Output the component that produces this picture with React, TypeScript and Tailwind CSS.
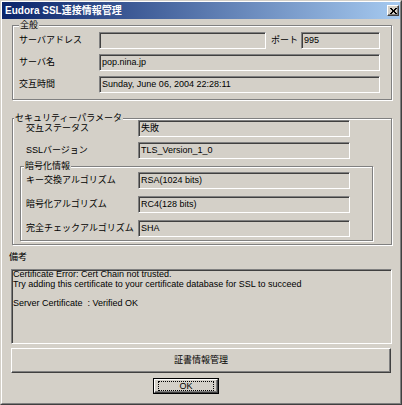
import type { ReactNode } from "react";

const sunken =
  "border border-t-[#808080] border-l-[#808080] border-b-white border-r-white shadow-[inset_1px_1px_0_#404040] bg-[#d4d0c8]";

function Field({ className, children }: { className: string; children?: ReactNode }) {
  return (
    <div className={`${sunken} flex h-[17px] items-center overflow-hidden whitespace-nowrap pl-[2px] text-[9px] leading-none ${className}`}>
      {children}
    </div>
  );
}

function Group({
  label,
  labelLeft,
  className,
  children,
}: {
  label: string;
  labelLeft: string;
  className: string;
  children: ReactNode;
}) {
  return (
    <div className={`relative border border-[#808080] shadow-[inset_1px_1px_0_#fff,1px_1px_0_#fff] ${className}`}>
      <span className={`absolute -top-[6px] bg-[#d4d0c8] px-[1px] text-[9px] leading-[11px] ${labelLeft}`}>
        {label}
      </span>
      {children}
    </div>
  );
}

function Row({ label, labelClass, children }: { label: string; labelClass: string; children: ReactNode }) {
  return (
    <div className="flex items-center">
      <span className={`shrink-0 text-[9px] leading-none ${labelClass}`}>{label}</span>
      {children}
    </div>
  );
}

export default function App() {
  return (
    <div className="h-[405px] w-[402px] border border-t-[#d4d0c8] border-l-[#d4d0c8] border-b-[#404040] border-r-[#404040] bg-[#d4d0c8] font-['Liberation_Sans','Noto_Sans_CJK_JP',sans-serif] text-black">
      <div className="flex h-full flex-col border border-t-white border-l-white border-b-[#808080] border-r-[#808080]">
        {/* title bar */}
        <div className="flex h-[17px] shrink-0 items-center justify-between bg-[linear-gradient(90deg,#0a246a,#a6caf0)] pl-[3px] pr-[1px]">
          <span className="text-[10px] font-bold leading-none text-white">Eudora SSL連接情報管理</span>
          <button className="flex h-[11px] w-[12px] items-center justify-center border border-t-white border-l-white border-b-[#404040] border-r-[#404040] bg-[#d4d0c8] shadow-[inset_-1px_-1px_0_#808080]">
            <svg width="7" height="6" viewBox="0 0 7 6" shapeRendering="crispEdges">
              <path d="M0 0h2v1h-2zM5 0h2v1h-2zM1 1h2v1h-2zM4 1h2v1h-2zM2 2h3v2h-3zM1 4h2v1h-2zM4 4h2v1h-2zM0 5h2v1h-2zM5 5h2v1h-2z" fill="#000" />
            </svg>
          </button>
        </div>

        {/* 全般 */}
        <Group label="全般" labelLeft="left-[6px]" className="ml-[10px] mt-[6px] h-[75px] w-[380px] shrink-0">
          <div className="flex flex-col gap-[5px] pt-[6px]">
            <Row label="サーバアドレス" labelClass="w-[86px] pl-[6px]">
              <Field className="w-[167px]" />
              <span className="ml-[5px] w-[30px] text-[9px] leading-none">ポート</span>
              <Field className="w-[79px]">995</Field>
            </Row>
            <Row label="サーバ名" labelClass="w-[86px] pl-[6px]">
              <Field className="w-[281px]">pop.nina.jp</Field>
            </Row>
            <Row label="交互時間" labelClass="w-[86px] pl-[6px]">
              <Field className="w-[281px]">Sunday, June 06, 2004 22:28:11</Field>
            </Row>
          </div>
        </Group>

        {/* セキュリティーパラメータ */}
        <Group label="セキュリティーパラメータ" labelLeft="left-[1px]" className="ml-[10px] mt-[18px] h-[127px] w-[380px] shrink-0">
          <div className="flex flex-col gap-[5px] pt-[1px]">
            <Row label="交互ステータス" labelClass="w-[125px] pl-[13px]">
              <Field className="w-[212px]">失敗</Field>
            </Row>
            <Row label="SSLバージョン" labelClass="w-[125px] pl-[13px]">
              <Field className="w-[212px]">TLS_Version_1_0</Field>
            </Row>
          </div>
          <Group label="暗号化情報" labelLeft="left-[3px]" className="ml-[7px] mt-[7px] h-[75px] w-[353px]">
            <div className="flex flex-col gap-[7px] pt-[5px]">
              <Row label="キー交換アルゴリズム" labelClass="w-[117px] pl-[5px]">
                <Field className="w-[212px]">RSA(1024 bits)</Field>
              </Row>
              <Row label="暗号化アルゴリズム" labelClass="w-[117px] pl-[5px]">
                <Field className="w-[212px]">RC4(128 bits)</Field>
              </Row>
              <Row label="完全チェックアルゴリズム" labelClass="w-[117px] pl-[5px]">
                <Field className="w-[212px]">SHA</Field>
              </Row>
            </div>
          </Group>
        </Group>

        {/* 備考 */}
        <span className="ml-[7px] mt-[6px] text-[9px] leading-[12px]">備考</span>
        <div className={`${sunken} ml-[9px] mt-[6px] h-[75px] w-[381px] shrink-0 whitespace-pre pl-[1px] text-[9px] leading-[9.5px]`}>
          {"Certificate Error: Cert Chain not trusted.\nTry adding this certificate to your certificate database for SSL to succeed\n\nServer Certificate  : Verified OK"}
        </div>

        <button className="ml-[9px] mt-[4px] h-[25px] w-[380px] shrink-0 border border-t-white border-l-white border-b-[#404040] border-r-[#404040] bg-[#d4d0c8] text-[9px] leading-none shadow-[inset_-1px_-1px_0_#808080]">
          証書情報管理
        </button>

        <button className="ml-[151px] mt-[5px] h-[16px] w-[66px] shrink-0 border border-black bg-[#d4d0c8] p-0">
          <div className="flex h-full w-full items-center justify-center border border-t-white border-l-white border-b-[#404040] border-r-[#404040] shadow-[inset_-1px_-1px_0_#808080]">
            <div className="flex h-[10px] w-[56px] items-center justify-center border border-dotted border-black text-[9px] leading-none">
              OK
            </div>
          </div>
        </button>
      </div>
    </div>
  );
}
